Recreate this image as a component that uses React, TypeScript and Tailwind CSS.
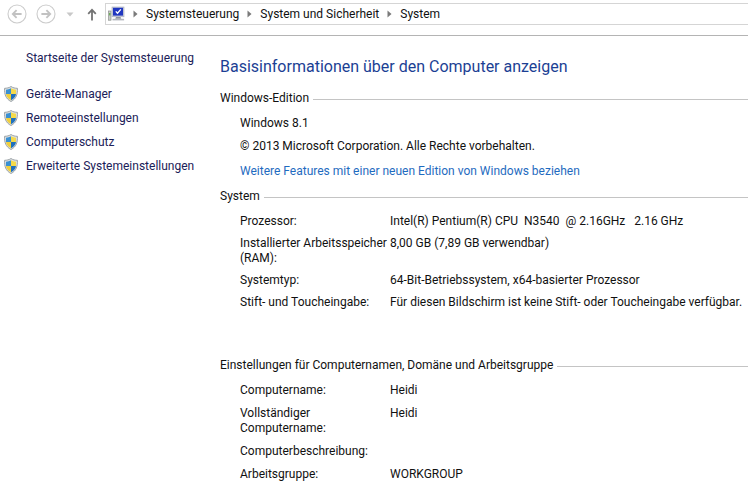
import type { ReactNode } from "react";

const crumbs = ["Systemsteuerung", "System und Sicherheit", "System"];

const tasks = [
  "Geräte-Manager",
  "Remoteeinstellungen",
  "Computerschutz",
  "Erweiterte Systemeinstellungen",
];

const systemRows = [
  { label: "Prozessor:", value: "Intel(R) Pentium(R) CPU  N3540  @ 2.16GHz   2.16 GHz" },
  { label: "Installierter Arbeitsspeicher (RAM):", value: "8,00 GB (7,89 GB verwendbar)" },
  { label: "Systemtyp:", value: "64-Bit-Betriebssystem, x64-basierter Prozessor" },
  {
    label: "Stift- und Toucheingabe:",
    value: "Für diesen Bildschirm ist keine Stift- oder Toucheingabe verfügbar.",
  },
];

const nameRows = [
  { label: "Computername:", value: "Heidi" },
  { label: "Vollständiger Computername:", value: "Heidi" },
  { label: "Computerbeschreibung:", value: "" },
  { label: "Arbeitsgruppe:", value: "WORKGROUP" },
];

function NavCircle({ flip }: { flip?: boolean }) {
  return (
    <svg width="20" height="20" viewBox="0 0 20 20" fill="none" aria-hidden className={flip ? "rotate-180" : ""}>
      <circle cx="10" cy="10" r="9" stroke="#cccccc" strokeWidth="1.1" />
      <path d="M14.6 10H6M9.6 6.2 5.8 10l3.8 3.8" stroke="#c2c2c2" strokeWidth="1.8" />
    </svg>
  );
}

function ComputerIcon() {
  return (
    <svg width="17" height="16" viewBox="0 0 17 16" aria-hidden>
      <rect x="0.6" y="5" width="2.4" height="9.2" fill="#c9ccc9" stroke="#8b908b" strokeWidth="0.7" />
      <rect x="1" y="7" width="1.5" height="2.4" fill="#6fae5c" />
      <rect x="4" y="1" width="12" height="9.8" fill="#c8cddb" stroke="#a5a9b9" strokeWidth="0.6" />
      <rect x="5" y="1.8" width="10" height="7.8" fill="#2036c0" />
      <path d="M7.8 5.4 9.5 7.3 12.8 3.4" fill="none" stroke="#fff" strokeWidth="1.4" />
      <path d="M8 11h4.5l.8 1.8H7.2z" fill="#8f939d" />
      <path d="M4.5 12.8h11.6v1.6H4.5z" fill="#b4b7bf" />
    </svg>
  );
}

function CrumbArrow() {
  return (
    <svg width="5" height="8" viewBox="0 0 5 8" aria-hidden>
      <path d="M0.5 0.5v7L4.5 4z" fill="#7a7a7a" />
    </svg>
  );
}

function ShieldIcon() {
  return (
    <svg width="14" height="16" viewBox="0 0 14 16" aria-hidden>
      <path
        d="M7 .5C5.2 1.8 2.8 2.3.6 2.3.3 8 1.6 12.8 7 15.5 12.4 12.8 13.7 8 13.4 2.3 11.2 2.3 8.8 1.8 7 .5z"
        fill="#dfe2e3"
        stroke="#929a9e"
        strokeWidth="0.9"
      />
      <path d="M7 2.2C5.5 3.1 3.8 3.6 2 3.7V8h5z" fill="#3a90d2" />
      <path d="M7 2.2c1.5.9 3.2 1.4 5 1.5V8H7z" fill="#f5da4a" />
      <path d="M2 8c.4 2.7 1.9 4.7 5 6.2V8z" fill="#f0cf3c" />
      <path d="M12 8c-.4 2.7-1.9 4.7-5 6.2V8z" fill="#1f70bd" />
    </svg>
  );
}

function Section({ title, className, children }: { title: string; className?: string; children: ReactNode }) {
  return (
    <section className={className}>
      <div className="flex items-center gap-1">
        <h2>{title}</h2>
        <span className="mt-0.5 h-px flex-1 bg-[#c4c4c4]" />
      </div>
      <div className="mt-2.5 pl-5">{children}</div>
    </section>
  );
}

function InfoList({ rows, className }: { rows: { label: string; value: string }[]; className: string }) {
  return (
    <dl className={`flex flex-col ${className}`}>
      {rows.map((row) => (
        <div key={row.label} className="flex">
          <dt className="w-[150px] shrink-0">{row.label}</dt>
          <dd className="whitespace-pre">{row.value}</dd>
        </div>
      ))}
    </dl>
  );
}

export default function App() {
  return (
    <div className="min-h-screen bg-white font-['Roboto','Segoe_UI',sans-serif] text-[12px] leading-[15px] text-[#111111]">
      <header className="flex h-9 items-start border-b border-[#b4b4b4] pt-[3px]">
        <div className="flex h-[22px] items-center pl-[7px]">
          <button type="button" aria-label="Zurück">
            <NavCircle />
          </button>
          <button type="button" aria-label="Vorwärts" className="ml-[9px]">
            <NavCircle flip />
          </button>
          <button type="button" aria-label="Zuletzt besucht" className="ml-[10px]">
            <svg width="8" height="5" viewBox="0 0 8 5" aria-hidden>
              <path d="M0.5 0.5h7L4 4.5z" fill="#c8c8c8" />
            </svg>
          </button>
          <button type="button" aria-label="Nach oben" className="ml-[13px]">
            <svg width="10" height="13" viewBox="0 0 10 13" fill="none" aria-hidden>
              <path d="M5 12.5V2M1.2 5.8 5 1.8l3.8 4" stroke="#737373" strokeWidth="1.8" />
            </svg>
          </button>
        </div>
        <nav aria-label="Pfad" className="ml-2 flex h-[22px] flex-1 items-center border-y border-l border-[#d5d5d5] pl-0.5">
          <ComputerIcon />
          <ol className="flex items-center">
            {crumbs.map((crumb) => (
              <li key={crumb} className="flex items-center gap-2 pl-2">
                <CrumbArrow />
                <a href="#" className="whitespace-nowrap">
                  {crumb}
                </a>
              </li>
            ))}
          </ol>
        </nav>
      </header>

      <div className="flex pt-px">
        <aside className="w-[220px] shrink-0 pl-1 pt-3.5 text-[#1b2158]">
          <a href="#" className="ml-[22px] block whitespace-nowrap">
            Startseite der Systemsteuerung
          </a>
          <ul className="mt-5 flex flex-col gap-2">
            {tasks.map((task) => (
              <li key={task}>
                <a href="#" className="flex h-4 items-center gap-2 whitespace-nowrap">
                  <ShieldIcon />
                  {task}
                </a>
              </li>
            ))}
          </ul>
        </aside>

        <main className="min-w-0 flex-1 pt-5">
          <h1 className="text-[16px] leading-[20px] text-[#1c3f94]">
            Basisinformationen über den Computer anzeigen
          </h1>
          <Section title="Windows-Edition" className="mt-3.5">
            <p>Windows 8.1</p>
            <p className="mt-2">© 2013 Microsoft Corporation. Alle Rechte vorbehalten.</p>
            <a href="#" className="mt-2.5 block text-[#1f6bc0]">
              Weitere Features mit einer neuen Edition von Windows beziehen
            </a>
          </Section>
          <Section title="System" className="mt-2.5">
            <InfoList rows={systemRows} className="gap-[7px]" />
          </Section>
          <Section title="Einstellungen für Computernamen, Domäne und Arbeitsgruppe" className="mt-12">
            <InfoList rows={nameRows} className="gap-2" />
          </Section>
        </main>
      </div>
    </div>
  );
}
